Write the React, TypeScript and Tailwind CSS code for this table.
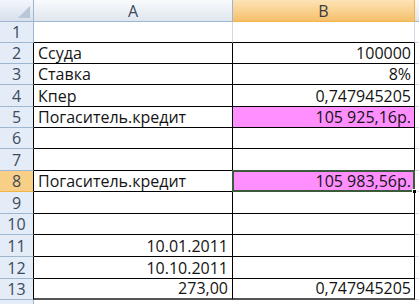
import React from 'react';

type Row = {
  n: number;
  h: number;
  a?: string;
  aRight?: boolean;
  b?: string;
  pink?: boolean;
  selected?: boolean;
};

const rows: Row[] = [
  { n: 1, h: 21 },
  { n: 2, h: 21, a: 'Ссуда', b: '100000' },
  { n: 3, h: 21, a: 'Ставка', b: '8%' },
  { n: 4, h: 22, a: 'Кпер', b: '0,747945205' },
  { n: 5, h: 21, a: 'Погаситель.кредит', b: '105 925,16р.', pink: true },
  { n: 6, h: 21 },
  { n: 7, h: 22 },
  { n: 8, h: 21, a: 'Погаситель.кредит', b: '105 983,56р.', pink: true, selected: true },
  { n: 9, h: 22 },
  { n: 10, h: 21 },
  { n: 11, h: 22, a: '10.01.2011', aRight: true },
  { n: 12, h: 22, a: '10.10.2011', aRight: true },
  { n: 13, h: 21, a: '273,00', aRight: true, b: '0,747945205' },
];

const font = { fontFamily: '"Open Sans", "Liberation Sans", Arial, sans-serif' };

export default function App() {
  return (
    <div className="w-[419px] h-[304px] overflow-hidden bg-white text-[16px] leading-[20px] text-[#141414]" style={font}>
      {/* column headers */}
      <div className="flex h-[22px]">
        <div className="relative w-[34px] shrink-0 border-r border-b border-[#9eb6ce] bg-gradient-to-b from-[#f3f6fb] to-[#d7e0ec]">
          <div className="absolute right-[3px] bottom-[3px] w-0 h-0 border-l-[12px] border-l-transparent border-b-[12px] border-b-[#b8c6d8]" />
        </div>
        <div className="w-[199px] shrink-0 flex items-center justify-center border-r border-b border-[#9eb6ce] bg-gradient-to-b from-[#f9fbfd] to-[#dfe6ef] text-[#3c4a5c]">
          A
        </div>
        <div className="w-[182px] shrink-0 flex items-center justify-center border-r border-b border-[#f1b54c] bg-gradient-to-b from-[#fde3b6] to-[#f5c068] text-[#3c3c3c]">
          B
        </div>
        <div className="flex-1 border-b border-[#9eb6ce] bg-gradient-to-b from-[#f9fbfd] to-[#dfe6ef]" />
      </div>

      {rows.map((r) => {
        const boxed = r.n > 1;
        const last = r.n === 13;
        const sideLine = boxed ? 'border-r-black' : 'border-r-[#d0d7e5]';
        return (
          <div key={r.n} className="flex" style={{ height: r.h }}>
            <div
              className={`w-[34px] shrink-0 flex items-center justify-center border-b border-r text-[#3c4a5c] ${
                r.n === 8 ? 'bg-[#f8cf86] border-b-[#f1b54c]' : 'bg-[#e4ecf7] border-b-[#9eb6ce]'
              } ${boxed ? 'border-r-black' : 'border-r-[#9eb6ce]'}`}
            >
              {r.n}
            </div>
            <div
              className={`w-[199px] shrink-0 flex items-end px-[4px] border-r ${sideLine} ${
                last ? 'border-b-2 border-b-[#555]' : 'border-b border-b-black'
              } ${r.aRight ? 'justify-end' : ''}`}
            >
              {r.a}
            </div>
            <div
              className={`relative w-[182px] shrink-0 flex items-end justify-end px-[3px] border-r ${sideLine} ${
                last ? 'border-b-2 border-b-[#555]' : 'border-b border-b-black'
              } ${r.pink ? 'bg-[#ff8fff]' : ''}`}
            >
              {r.b}
              {r.selected && (
                <>
                  <div className="absolute -left-[1px] -top-[1px] -right-[1px] -bottom-[1px] border-2 border-[#3b5a3b]" />
                  <div className="absolute -right-[3px] -bottom-[3px] w-[5px] h-[5px] bg-black border border-white" />
                </>
              )}
            </div>
            <div className="flex-1 border-b border-[#d0d7e5]" />
          </div>
        );
      })}

      <div className="flex h-[10px]">
        <div className="w-[34px] shrink-0 bg-[#e4ecf7] border-r border-[#9eb6ce]" />
        <div className="flex-1" />
      </div>
    </div>
  );
}
